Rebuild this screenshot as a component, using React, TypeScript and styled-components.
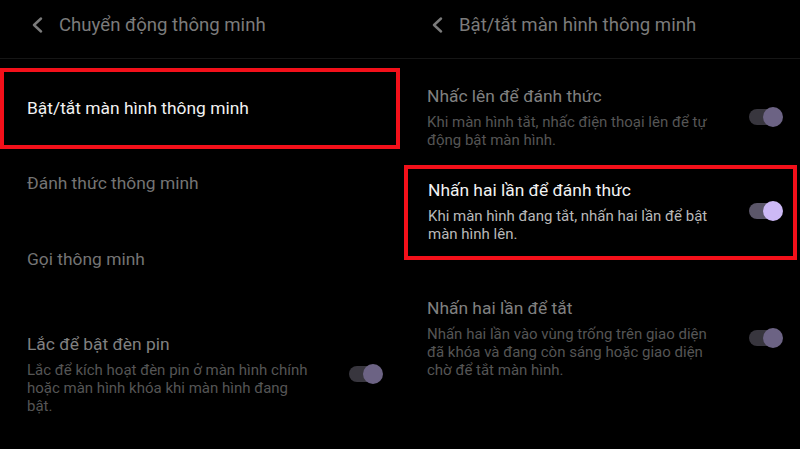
import styled, { createGlobalStyle } from "styled-components";

const GlobalStyle = createGlobalStyle`
  html, body {
    margin: 0;
    padding: 0;
    background: #000;
  }
  body {
    font-family: Roboto, "Noto Sans", "Liberation Sans", sans-serif;
  }
`;

interface ToggleItem {
  title: string;
  desc: string;
  active?: boolean;
  highlight?: boolean;
}

const Screen = styled.div`
  display: grid;
  grid-template-columns: 400px 400px;
  width: 800px;
  height: 449px;
  background: #000;
  overflow: hidden;
`;

const Panel = styled.div`
  display: flex;
  flex-direction: column;
`;

const Header = styled.div`
  display: flex;
  align-items: center;
  gap: 16px;
  height: 59px;
  box-sizing: border-box;
  padding: 0 0 9px 31px;
  border-bottom: 1px solid #161616;
  color: #7b7b7b;
  font-size: 18.6px;
`;

const BackIcon = () => (
  <svg width="12" height="16" viewBox="0 0 12 16">
    <path d="M10 1.5 L3 8 L10 14.5" fill="none" stroke="#7b7b7b" strokeWidth="2.4" strokeLinecap="round" strokeLinejoin="round" />
  </svg>
);

const SimpleRow = styled.div<{ $top: number; $bottom: number; $highlight?: boolean }>`
  display: flex;
  align-items: center;
  padding: ${(p) => p.$top}px 27px ${(p) => p.$bottom}px;
  font-size: 17.4px;
  line-height: 22px;
  color: ${(p) => (p.$highlight ? "#f2f2f2" : "#747474")};
  ${(p) => p.$highlight && "border: 4px solid #f3101a; margin-top: 9px; padding-left: 23px;"}
`;

const ToggleRow = styled.div<{ $top: number; $bottom: number; $highlight?: boolean }>`
  display: flex;
  align-items: center;
  justify-content: space-between;
  padding: ${(p) => p.$top}px 17px ${(p) => p.$bottom}px 27px;
  ${(p) => p.$highlight && "border: 4px solid #f3101a; margin-left: 4px; margin-right: 3px; padding-left: 20px; padding-right: 10px;"}
`;

const TextBlock = styled.div`
  display: flex;
  flex-direction: column;
  gap: 6px;
  width: 290px;
`;

const Title = styled.div<{ $active?: boolean }>`
  font-size: 17.4px;
  line-height: 22px;
  color: ${(p) => (p.$active ? "#f2f2f2" : "#808080")};
`;

const Desc = styled.div<{ $active?: boolean }>`
  font-size: 15px;
  line-height: 18px;
  color: ${(p) => (p.$active ? "#b9b9b9" : "#555555")};
`;

const Switch = styled.div<{ $active?: boolean }>`
  position: relative;
  width: 34px;
  height: 20px;
  flex-shrink: 0;

  &::before {
    content: "";
    position: absolute;
    left: 0;
    top: 2px;
    width: 30px;
    height: 16px;
    border-radius: 8px;
    background: ${(p) => (p.$active ? "#5b5669" : "#38363e")};
  }

  &::after {
    content: "";
    position: absolute;
    right: 0;
    top: 0;
    width: 20px;
    height: 20px;
    border-radius: 50%;
    background: ${(p) => (p.$active ? "#cdb9f6" : "#6c6384")};
  }
`;

const rightItems: (ToggleItem & { top: number; bottom: number })[] = [
  {
    title: "Nhấc lên để đánh thức",
    desc: "Khi màn hình tắt, nhấc điện thoại lên để tự động bật màn hình.",
    top: 26,
    bottom: 16,
  },
  {
    title: "Nhấn hai lần để đánh thức",
    desc: "Khi màn hình đang tắt, nhấn hai lần để bật màn hình lên.",
    active: true,
    highlight: true,
    top: 10,
    bottom: 13,
  },
  {
    title: "Nhấn hai lần để tắt",
    desc: "Nhấn hai lần vào vùng trống trên giao diện đã khóa và đang còn sáng hoặc giao diện chờ để tắt màn hình.",
    top: 37,
    bottom: 0,
  },
];

const App = () => {
  return (
    <>
      <GlobalStyle />
      <Screen>
        <Panel>
          <Header>
            <BackIcon />
            <span>Chuyển động thông minh</span>
          </Header>
          <SimpleRow $top={25} $bottom={26} $highlight>
            Bật/tắt màn hình thông minh
          </SimpleRow>
          <SimpleRow $top={23} $bottom={30}>
            Đánh thức thông minh
          </SimpleRow>
          <SimpleRow $top={24} $bottom={29}>
            Gọi thông minh
          </SimpleRow>
          <ToggleRow $top={34} $bottom={0}>
            <TextBlock>
              <Title>Lắc để bật đèn pin</Title>
              <Desc>Lắc để kích hoạt đèn pin ở màn hình chính hoặc màn hình khóa khi màn hình đang bật.</Desc>
            </TextBlock>
            <Switch />
          </ToggleRow>
        </Panel>
        <Panel>
          <Header>
            <BackIcon />
            <span>Bật/tắt màn hình thông minh</span>
          </Header>
          {rightItems.map((item) => (
            <ToggleRow key={item.title} $top={item.top} $bottom={item.bottom} $highlight={item.highlight}>
              <TextBlock>
                <Title $active={item.active}>{item.title}</Title>
                <Desc $active={item.active}>{item.desc}</Desc>
              </TextBlock>
              <Switch $active={item.active} />
            </ToggleRow>
          ))}
        </Panel>
      </Screen>
    </>
  );
};

export default App;
